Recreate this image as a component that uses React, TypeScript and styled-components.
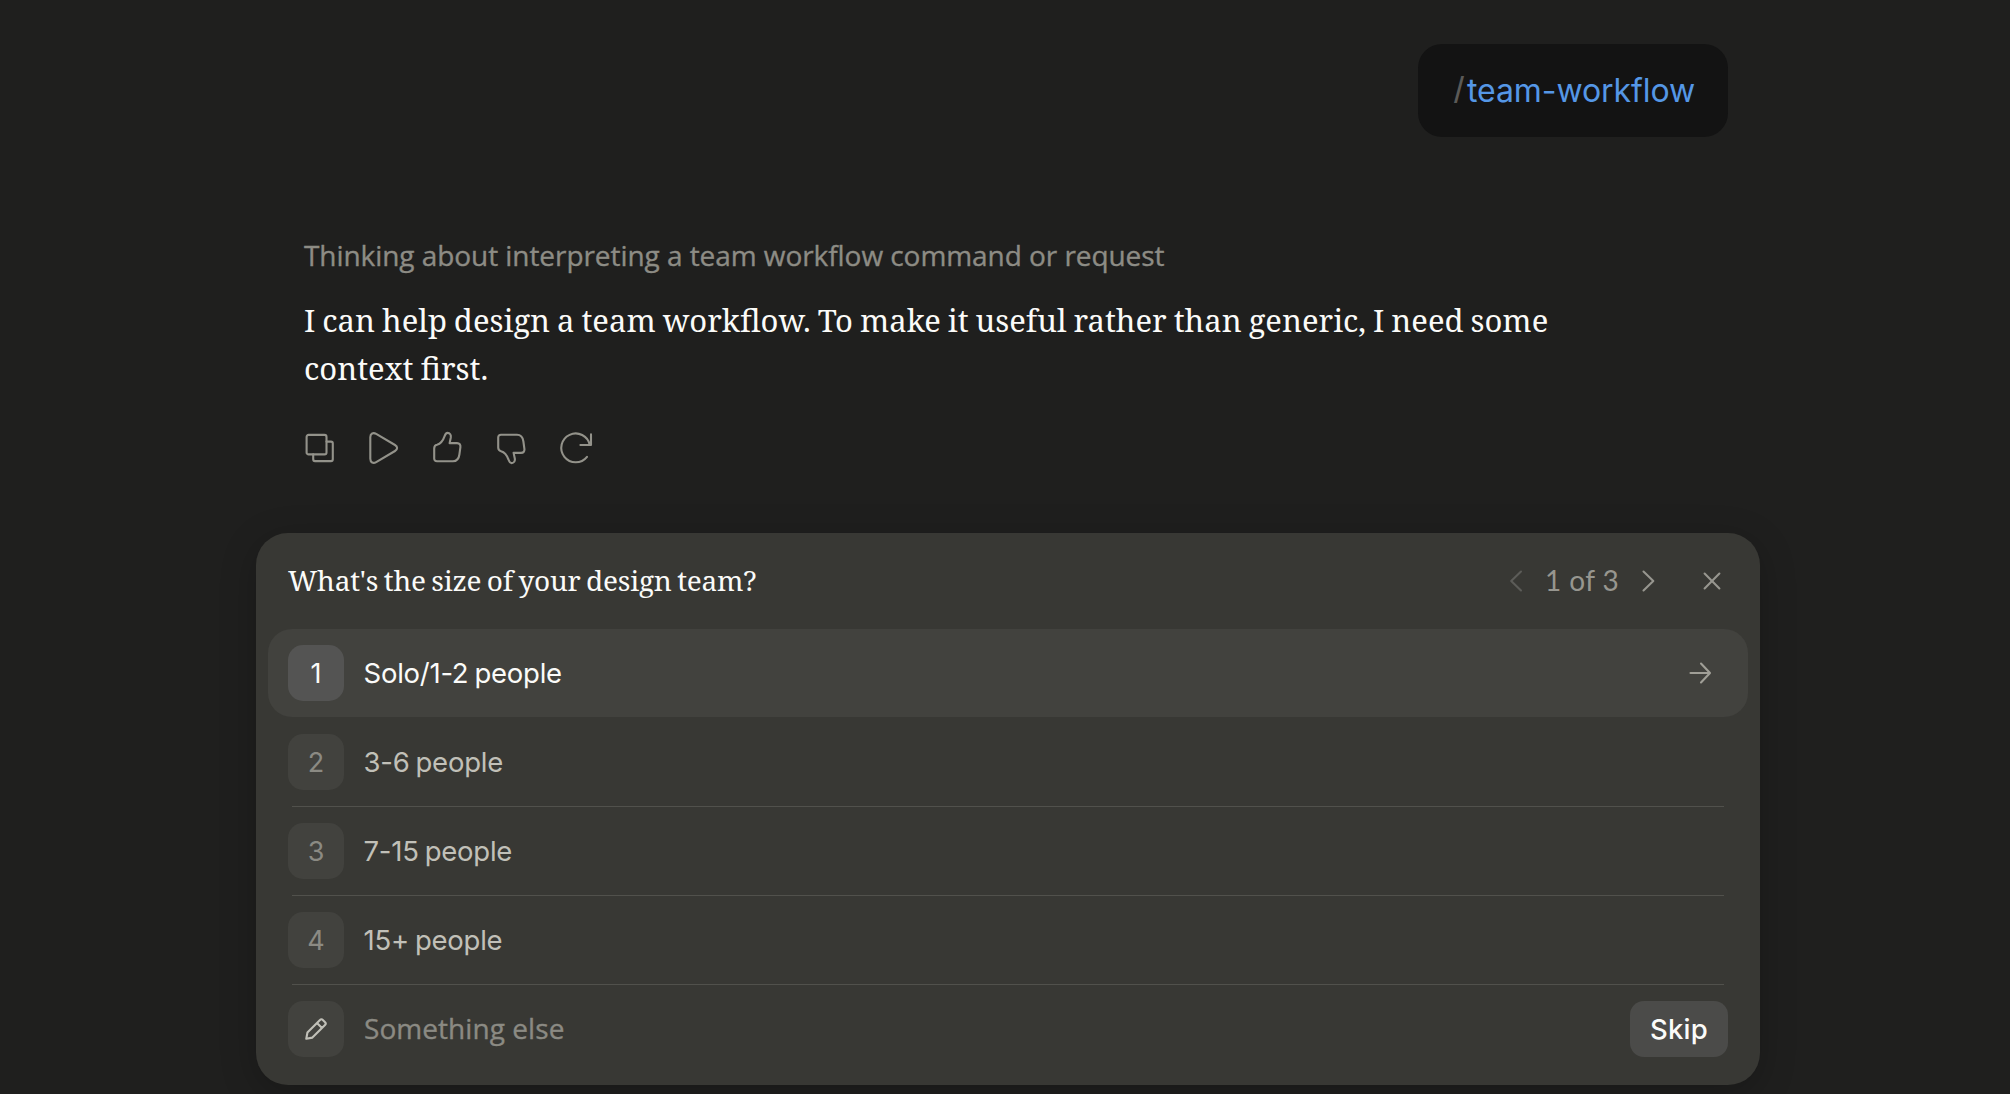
import React from "react";
import styled, { createGlobalStyle } from "styled-components";

const sans = `Inter, "Liberation Sans", sans-serif`;
const humanist = `"Open Sans", "Noto Sans", sans-serif`;
const serif = `"Noto Serif", "DejaVu Serif Condensed", "Liberation Serif", serif`;

const GlobalStyle = createGlobalStyle`
  * { box-sizing: border-box; }
  body { margin: 0; background: #1f1f1e; overflow: hidden; }
  button { border: 0; padding: 0; margin: 0; background: none; color: inherit; font: inherit; cursor: pointer; }
`;

const Page = styled.main`
  height: 1094px;
  padding: 44px 250px 0 256px;
  overflow: hidden;
  display: flex;
  flex-direction: column;
  font-family: ${sans};
`;

const Conversation = styled.section`
  height: 489px;
  flex: none;
  padding: 0 32px 0 48px;
  display: flex;
  flex-direction: column;
`;

const UserBubble = styled.div`
  align-self: flex-end;
  width: 310px;
  height: 93px;
  border-radius: 24px;
  background: #131313;
  display: flex;
  align-items: center;
  padding: 0 0 0 36px;
  font-size: 32px;
  white-space: nowrap;
`;

const Slash = styled.span`
  color: #5b5a57;
  font: 36px/40px "Liberation Sans", Arial, sans-serif;
  width: 13px;
`;

const Command = styled.span`
  color: #5597e6;
  letter-spacing: -0.08px;
`;

const Thinking = styled.div`
  margin-top: 98px;
  font: 28px/40px ${humanist};
  letter-spacing: -0.06px;
  -webkit-text-stroke: 0.35px currentColor;
  color: #8d8c85;
  white-space: nowrap;
`;

const Answer = styled.p`
  margin: 21px 0 0;
  width: 1300px;
  font: 31px/48px ${serif};
  word-spacing: -1.1px;
  color: #fbfbf9;
`;

const Actions = styled.div`
  margin-top: 40px;
  display: flex;
  gap: 32px;
  color: #93928a;
`;

const IconButton = styled.button<{ $size?: number }>`
  width: ${p => p.$size ?? 32}px;
  height: ${p => p.$size ?? 32}px;
  display: flex;
  flex: none;
`;

const Card = styled.section`
  height: 552px;
  flex: none;
  border-radius: 32px;
  padding: 0 12px 12px;
  background: #383834;
  box-shadow: 0 8px 36px rgba(0, 0, 0, 0.22);
`;

const CardHeader = styled.header`
  height: 96px;
  padding: 0 24px 0 20px;
  display: flex;
  align-items: center;
`;

const Question = styled.h2`
  margin: -2px auto 0 0;
  font: 400 28px/40px ${serif};
  letter-spacing: -0.22px;
  word-spacing: -1.5px;
  color: #fbfbf9;
`;

const Pager = styled.div`
  display: flex;
  align-items: center;
  color: #97968f;
`;

const PageCount = styled.span`
  width: 73px;
  margin: -2px 18px 0 17px;
  font: 28px/40px Lato, sans-serif;
  letter-spacing: 0.4px;
  white-space: nowrap;
`;

const Faded = styled.span`
  display: flex;
  color: #5c5c58;
`;

const CloseSlot = styled.span`
  display: flex;
  margin-left: 40px;
`;

const Row = styled.div<{ $active?: boolean }>`
  height: 88px;
  padding: 0 20px;
  display: flex;
  align-items: center;
  border-radius: 24px;
  background: ${p => (p.$active ? "#42423e" : "transparent")};
  color: ${p => (p.$active ? "#fbfbf9" : "#c1c0b8")};
`;

const Divider = styled.hr<{ $hidden?: boolean }>`
  height: 1px;
  margin: 0 24px;
  border: 0;
  background: ${p => (p.$hidden ? "transparent" : "#51514c")};
`;

const Badge = styled.span<{ $active?: boolean }>`
  width: 56px;
  height: 56px;
  flex: none;
  border-radius: 15px;
  display: flex;
  align-items: center;
  justify-content: center;
  background: ${p => (p.$active ? "#545453" : "#42423e")};
  color: ${p => (p.$active ? "#fbfbf9" : "#8b8a83")};
  font-size: 27px;
`;

const PencilSlot = styled.span`
  display: flex;
  color: #c1c0b8;
`;

const Label = styled.span`
  margin: 0 auto 0 19.5px;
  font-size: 27.5px;
  letter-spacing: -0.25px;
  word-spacing: -1.4px;
`;

const Placeholder = styled.span`
  margin: -2px auto 0 20px;
  font: 28px/40px ${humanist};
  letter-spacing: 0.06px;
  -webkit-text-stroke: 0.35px currentColor;
  color: #8b8a83;
`;

const ArrowSlot = styled.span`
  display: flex;
  margin-right: 16px;
  color: #a09f97;
`;

const SkipButton = styled.button`
  width: 98px;
  height: 56px;
  border-radius: 14px;
  background: #4b4b49;
  color: #fbfbf9;
  font: 500 27.5px ${sans};
  letter-spacing: 0.2px;
`;

type IconProps = { size?: number; width?: number; children: React.ReactNode };
const Icon = ({ size = 32, width = 2.1, children }: IconProps) => (
  <svg width={size} height={size} viewBox={`0 0 ${size} ${size}`} fill="none" stroke="currentColor"
    strokeWidth={width} strokeLinecap="round" strokeLinejoin="round" overflow="visible">{children}</svg>
);

const thumb =
  "M2.2 16.4C2.2 13.9 3 13.2 5 12.8C9 11.8 11.2 8.2 12.6 4.2C13.3 2 14 .9 15.5 .9C18 .9 19.2 3 18.8 5.5L17.6 11.1H25C27.6 11.1 28.7 12.8 28.4 15.2L27.4 22.5C26.8 27 24.8 29.2 21 29.2H5C3.2 29.2 2.2 28.2 2.2 26.4Z";

const options = ["Solo/1-2 people", "3-6 people", "7-15 people", "15+ people"];

export default function App() {
  return (
    <Page>
      <GlobalStyle />
      <Conversation>
        <UserBubble><Slash>/</Slash><Command>team-workflow</Command></UserBubble>
        <Thinking>Thinking about interpreting a team workflow command or request</Thinking>
        <Answer>
          I can help design a team workflow. To make it useful rather than generic, I need some context first.
        </Answer>
        <Actions>
          <IconButton aria-label="Copy">
            <Icon><rect x="2.6" y="2.9" width="19.9" height="19.5" rx="2" /><path d="M22.5 9.6H27a1.8 1.8 0 0 1 1.8 1.8V27.3a1.8 1.8 0 0 1-1.8 1.8H11a1.8 1.8 0 0 1-1.8-1.8V22.4" /></Icon>
          </IconButton>
          <IconButton aria-label="Read aloud">
            <Icon><path d="M2.3 5.2C2.3 1.4 5.2 .2 8.2 1.9L27 13C29.8 14.7 29.8 17.3 27 19L8.2 30.1C5.2 31.8 2.3 30.6 2.3 26.8Z" /></Icon>
          </IconButton>
          <IconButton aria-label="Good response"><Icon><path d={thumb} /></Icon></IconButton>
          <IconButton aria-label="Bad response"><Icon><g transform="matrix(1 0 0 -1 0 32)"><path d={thumb} /></g></Icon></IconButton>
          <IconButton aria-label="Retry">
            <Icon><path d="M27 24.8A14.4 14.4 0 1 1 29.8 13M31 2.4V13H20.4" /></Icon>
          </IconButton>
        </Actions>
      </Conversation>

      <Card>
        <CardHeader>
          <Question>What's the size of your design team?</Question>
          <Pager>
            <Faded>
              <IconButton $size={24} aria-label="Previous"><Icon size={24}><path d="M17 2.6L7.2 12L17 21.4" /></Icon></IconButton>
            </Faded>
            <PageCount>1 of 3</PageCount>
            <IconButton $size={24} aria-label="Next"><Icon size={24}><path d="M7.5 2.6L17.3 12L7.5 21.4" /></Icon></IconButton>
            <CloseSlot>
              <IconButton $size={24} aria-label="Close"><Icon size={24}><path d="M4.6 4.6L19.4 19.4M19.4 4.6L4.6 19.4" /></Icon></IconButton>
            </CloseSlot>
          </Pager>
        </CardHeader>
        {options.map((label, i) => (
          <React.Fragment key={label}>
            <Row $active={i === 0}>
              <Badge $active={i === 0}>{i + 1}</Badge>
              <Label>{label}</Label>
              {i === 0 && (
                <ArrowSlot><Icon size={24}><path d="M2.5 12H21.5M13 2.6L22 12L13 21.4" /></Icon></ArrowSlot>
              )}
            </Row>
            <Divider $hidden={i === 0} />
          </React.Fragment>
        ))}
        <Row>
          <Badge>
            <PencilSlot>
              <Icon size={24}><path d="M2.3 21.8L3.4 15.6L16 3C16.9 2.1 18 2.1 18.8 2.9L21.1 5.2C21.9 6 21.9 7.1 21 8L8.4 20.6ZM13 6L18 11" /></Icon>
            </PencilSlot>
          </Badge>
          <Placeholder>Something else</Placeholder>
          <SkipButton>Skip</SkipButton>
        </Row>
      </Card>
    </Page>
  );
}
